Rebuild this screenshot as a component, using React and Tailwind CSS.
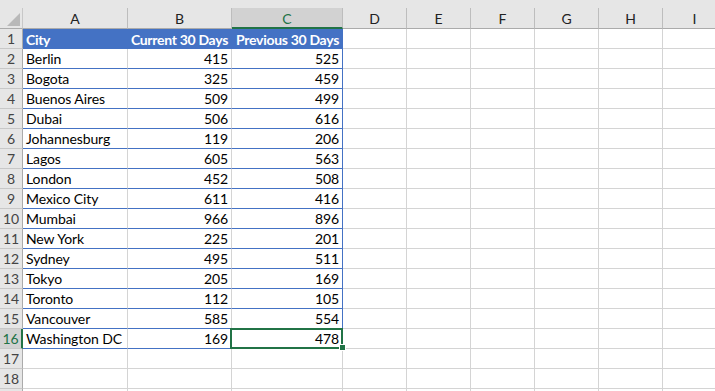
const COLS = [
  { k: 'A', w: 'w-[105px]' },
  { k: 'B', w: 'w-[104px]' },
  { k: 'C', w: 'w-[111px]' },
  { k: 'D', w: 'w-[64px]' },
  { k: 'E', w: 'w-[64px]' },
  { k: 'F', w: 'w-[64px]' },
  { k: 'G', w: 'w-[64px]' },
  { k: 'H', w: 'w-[64px]' },
  { k: 'I', w: 'w-[64px]' },
]

const DATA = [
  ['Berlin', 415, 525],
  ['Bogota', 325, 459],
  ['Buenos Aires', 509, 499],
  ['Dubai', 506, 616],
  ['Johannesburg', 119, 206],
  ['Lagos', 605, 563],
  ['London', 452, 508],
  ['Mexico City', 611, 416],
  ['Mumbai', 966, 896],
  ['New York', 225, 201],
  ['Sydney', 495, 511],
  ['Tokyo', 205, 169],
  ['Toronto', 112, 105],
  ['Vancouver', 585, 554],
  ['Washington DC', 169, 478],
]

function RowHead({ n, selected }) {
  return (
    <div
      className={
        selected
          ? 'flex h-[20px] w-[23px] shrink-0 items-center justify-center border-r-2 border-b border-r-[#217346] border-b-[#c8c8c8] bg-[#d2d2d2] pt-px text-[#217346]'
          : 'flex h-[20px] w-[23px] shrink-0 items-center justify-center border-r border-b border-r-[#ababab] border-b-[#c8c8c8] bg-[#e6e6e6] pt-px text-[#444]'
      }
    >
      {n}
    </div>
  )
}

function EmptyCells({ from }) {
  return COLS.slice(from).map((c) => (
    <div key={c.k} className={`${c.w} h-[20px] shrink-0 border-r border-b border-[#d4d4d4] bg-white`} />
  ))
}

export default function App() {
  return (
    <div className="h-[391px] w-[715px] overflow-hidden whitespace-nowrap bg-white font-['Lato',sans-serif] text-[14px] leading-none tracking-[-0.1px] text-black">
      <div className="h-[8px] w-[727px] bg-[#e6e6e6]" />

      {/* column headers */}
      <div className="flex h-[21px] w-[727px] bg-[#e6e6e6]">
        <div className="relative w-[23px] shrink-0 border-r border-b border-r-[#c8c8c8] border-b-[#ababab]">
          <svg className="absolute left-[7px] top-[5px]" width="13" height="13" viewBox="0 0 13 13">
            <path d="M13 0 L13 13 L0 13 Z" fill="#b9b9b9" />
          </svg>
        </div>
        {COLS.map((c) =>
          c.k === 'C' ? (
            <div
              key={c.k}
              className={`${c.w} flex shrink-0 items-center justify-center border-r border-b-2 border-r-[#bdbdbd] border-b-[#217346] bg-[#d2d2d2] pt-[2px] text-[#217346]`}
            >
              {c.k}
            </div>
          ) : (
            <div
              key={c.k}
              className={`${c.w} flex shrink-0 items-center justify-center border-r border-b border-r-[#bdbdbd] border-b-[#ababab] pt-px text-[#222]`}
            >
              {c.k}
            </div>
          ),
        )}
      </div>

      {/* row 1: table header */}
      <div className="flex w-[727px]">
        <RowHead n={1} />
        <div className="flex h-[20px] w-[320px] shrink-0 items-center bg-[#4472c4] pt-px font-bold tracking-[-0.3px] text-white">
          <div className="w-[105px] shrink-0 pl-[3px]">City</div>
          <div className="w-[104px] shrink-0 pr-[4px] text-right">Current 30 Days</div>
          <div className="w-[111px] shrink-0 pr-[4px] text-right">Previous 30 Days</div>
        </div>
        <EmptyCells from={3} />
      </div>

      {DATA.map(([city, cur, prev], i) => {
        const last = i === DATA.length - 1
        return (
          <div key={city} className="flex w-[727px]">
            <RowHead n={i + 2} selected={last} />
            <div className="flex h-[20px] w-[105px] shrink-0 items-center border-r border-b border-r-[#d4d4d4] border-b-[#4472c4] pl-[3px] pt-px">
              {city}
            </div>
            <div className="flex h-[20px] w-[104px] shrink-0 items-center justify-end border-r border-b border-r-[#d4d4d4] border-b-[#4472c4] pr-[3px] pt-px">
              {cur}
            </div>
            <div className="relative flex h-[20px] w-[111px] shrink-0 items-center justify-end border-r border-b border-[#4472c4] pr-[3px] pt-px">
              {prev}
              {last && (
                <>
                  <div className="absolute -left-[2px] -top-[1px] h-[21px] w-[113px] border-2 border-[#217346]" />
                  <div className="absolute left-[107px] top-[15px] h-[7px] w-[7px] border border-white bg-[#217346]" />
                </>
              )}
            </div>
            <EmptyCells from={3} />
          </div>
        )
      })}

      {[17, 18, ''].map((n) => (
        <div key={n} className="flex w-[727px]">
          <RowHead n={n} />
          <EmptyCells from={0} />
        </div>
      ))}
    </div>
  )
}
